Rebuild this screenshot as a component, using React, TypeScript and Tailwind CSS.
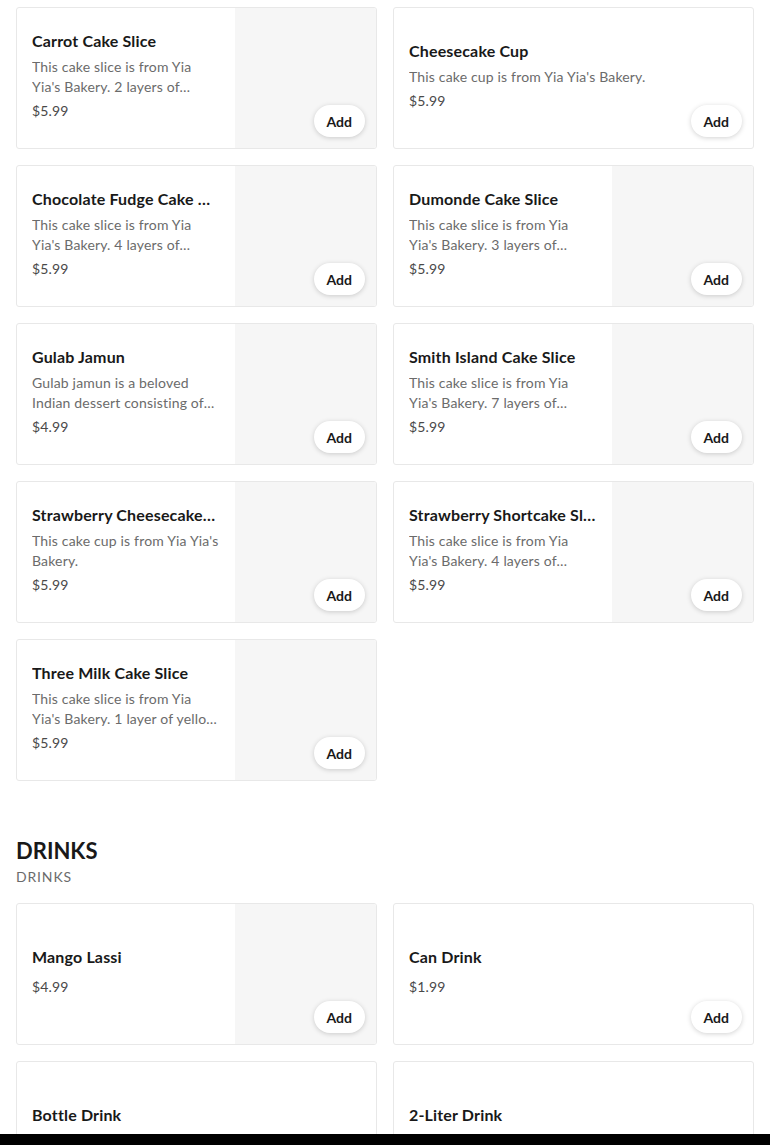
type Item = {
  name: string;
  desc?: string;
  price: string;
  image?: boolean;
};

const cakes: Item[] = [
  { name: "Carrot Cake Slice", desc: "This cake slice is from Yia Yia's Bakery. 2 layers of carrot cake with cream cheese frosting.", price: "$5.99", image: true },
  { name: "Cheesecake Cup", desc: "This cake cup is from Yia Yia's Bakery.", price: "$5.99" },
  { name: "Chocolate Fudge Cake Slice", desc: "This cake slice is from Yia Yia's Bakery. 4 layers of chocolate cake with fudge frosting.", price: "$5.99", image: true },
  { name: "Dumonde Cake Slice", desc: "This cake slice is from Yia Yia's Bakery. 3 layers of yellow cake with chocolate frosting.", price: "$5.99", image: true },
  { name: "Gulab Jamun", desc: "Gulab jamun is a beloved Indian dessert consisting of deep-fried dough balls soaked in syrup.", price: "$4.99", image: true },
  { name: "Smith Island Cake Slice", desc: "This cake slice is from Yia Yia's Bakery. 7 layers of yellow cake with chocolate fudge.", price: "$5.99", image: true },
  { name: "Strawberry Cheesecake Cup", desc: "This cake cup is from Yia Yia's Bakery.", price: "$5.99", image: true },
  { name: "Strawberry Shortcake Slice", desc: "This cake slice is from Yia Yia's Bakery. 4 layers of vanilla cake with strawberries.", price: "$5.99", image: true },
  { name: "Three Milk Cake Slice", desc: "This cake slice is from Yia Yia's Bakery. 1 layer of yellow cake soaked in three milks.", price: "$5.99", image: true },
];

const drinks: Item[] = [
  { name: "Mango Lassi", price: "$4.99", image: true },
  { name: "Can Drink", price: "$1.99" },
  { name: "Bottle Drink", price: "$2.99" },
  { name: "2-Liter Drink", price: "$3.99" },
];

function MenuCard({ item }: { item: Item }) {
  return (
    <div className="relative flex h-[142px] overflow-hidden rounded-[3px] border border-[#e8e8e8] bg-white">
      <div className="flex min-w-0 flex-1 flex-col justify-center pl-[15px] pr-4 pb-[6px]">
        <p className="truncate text-[16px] font-bold leading-6 tracking-[0.01em] text-[#191919]">
          {item.name}
        </p>
        {item.desc && (
          <p className="mt-1 line-clamp-2 text-[14px] leading-5 tracking-[0.012em] text-[#6b6b6b]">
            {item.desc}
          </p>
        )}
        <p
          className={
            item.desc
              ? "mt-1 text-[14px] leading-5 tracking-[0.012em] text-[#494949]"
              : "mt-2 text-[14px] leading-5 tracking-[0.012em] text-[#494949]"
          }
        >
          {item.price}
        </p>
      </div>
      {item.image && <div className="h-full w-[141px] shrink-0 bg-[#f6f6f6]" />}
      <button className="absolute bottom-[11px] right-[11px] h-8 rounded-full bg-white px-[13px] text-[14px] font-bold text-[#191919] shadow-[0_1px_5px_rgba(0,0,0,0.18)]">
        Add
      </button>
    </div>
  );
}

export default function App() {
  return (
    <div
      className="min-h-screen bg-white px-4 pt-[7px] pb-10"
      style={{ fontFamily: "Lato, 'Noto Sans', sans-serif" }}
    >
      <div className="grid grid-cols-2 gap-4">
        {cakes.map((c) => (
          <MenuCard key={c.name} item={c} />
        ))}
      </div>

      <div className="mt-[56px]">
        <h2 className="text-[22px] font-bold leading-7 text-[#191919]">DRINKS</h2>
        <p className="mt-[2px] text-[14px] leading-5 tracking-[0.06em] text-[#6b6b6b]">
          DRINKS
        </p>
      </div>

      <div className="mt-[16px] grid grid-cols-2 gap-4">
        {drinks.map((d) => (
          <MenuCard key={d.name} item={d} />
        ))}
      </div>

      <div className="fixed bottom-0 left-0 h-[11px] w-full bg-black" />
    </div>
  );
}
